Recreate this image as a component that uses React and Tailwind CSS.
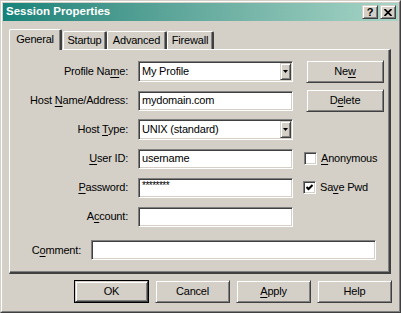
import React from "react";

const font = "font-['Liberation_Sans',Arial,sans-serif]";
const raised =
  "border border-t-[#d4d0c8] border-l-[#d4d0c8] border-r-[#404040] border-b-[#404040] shadow-[inset_1px_1px_0_#fff,inset_-1px_-1px_0_#808080] bg-[#d4d0c8]";
const sunken =
  "border border-t-[#808080] border-l-[#808080] border-r-white border-b-white shadow-[inset_1px_1px_0_#404040,inset_-1px_-1px_0_#d4d0c8]";

const U = ({ children }) => <span className="underline underline-offset-[2px]">{children}</span>;

const Label = ({ children }) => (
  <div className="text-right pr-px text-black whitespace-nowrap">{children}</div>
);

const TextBox = ({ value, w = "w-[155px]", small }) => (
  <div className={`${sunken} ${w} h-[20px] bg-white flex items-center pl-[3px] p-px`}>
    <span className={small ? "text-[10px] leading-none -mt-[3px] tracking-[-0.5px]" : ""}>{value}</span>
  </div>
);

const Combo = ({ value }) => (
  <div className={`${sunken} w-[155px] h-[21px] bg-white flex p-px`}>
    <div className="flex-1 flex items-center pl-[2px]">{value}</div>
    <div className={`${raised} w-[11px] h-full flex items-center justify-center`}>
      <svg width="5" height="3" viewBox="0 0 5 3">
        <path d="M0 0H5L2.5 3Z" fill="#000" />
      </svg>
    </div>
  </div>
);

const Button = ({ children, w = "w-[75px]", h = "h-[23px]" }) => (
  <div className={`${raised} ${w} ${h} flex items-center justify-center text-black`}>{children}</div>
);

const Check = ({ checked, children }) => (
  <div className="flex items-center gap-[4px]">
    <div className={`${sunken} w-[13px] h-[13px] bg-white flex items-center justify-center`}>
      {checked && (
        <svg width="7" height="7" viewBox="0 0 7 7">
          <path d="M0.5 3 L2.5 5 L6.5 1" stroke="#000" strokeWidth="2" fill="none" />
        </svg>
      )}
    </div>
    <span>{children}</span>
  </div>
);

const Tab = ({ children, selected, w }) => (
  <div
    className={`${w} ${
      selected ? "h-[21px] -mb-px relative z-10 pb-[2px]" : "h-[18px]"
    } bg-[#d4d0c8] border-t border-l border-t-white border-l-white border-r-2 border-r-[#404040] shadow-[inset_-1px_0_0_#808080] rounded-t-[2px] flex items-center justify-center`}
  >
    {children}
  </div>
);

export default function App() {
  return (
    <div
      className={`w-[401px] h-[313px] bg-[#d4d0c8] ${font} text-[11px] tracking-[-0.2px] text-black border border-t-[#d4d0c8] border-l-[#d4d0c8] border-r-[#404040] border-b-[#404040]`}
    >
      <div className="h-full border border-t-white border-l-white border-r-[#808080] border-b-[#808080] p-px flex flex-col">
        {/* Title bar */}
        <div className="h-[18px] shrink-0 bg-gradient-to-r from-[#13837a] to-[#a6d5c6] flex items-center pl-[3px] pr-[2px]">
          <span className="text-white font-bold text-[11.5px] tracking-normal flex-1">Session Properties</span>
          <div className={`${raised} w-[16px] h-[14px] flex items-center justify-center`}>
            <span className="font-bold text-[11px] leading-none tracking-normal">?</span>
          </div>
          <div className={`${raised} w-[16px] h-[14px] ml-[2px] flex items-center justify-center`}>
            <svg width="8" height="7" viewBox="0 0 8 7">
              <path d="M0.5 0 L7.5 7 M7.5 0 L0.5 7" stroke="#000" strokeWidth="1.7" />
            </svg>
          </div>
        </div>

        {/* Body */}
        <div className="flex-1 pl-[6px] pr-[6px] pt-[8px] flex flex-col">
          <div className="h-[20px] flex items-end">
            <Tab selected w="w-[53px]">General</Tab>
            <Tab w="w-[44px] ml-px">Startup</Tab>
            <Tab w="w-[60px]">Advanced</Tab>
            <Tab w="w-[47px]">Firewall</Tab>
          </div>

          <div className="w-[382px] h-[225px] border-t border-l border-t-white border-l-white border-r-2 border-b-2 border-r-[#404040] border-b-[#404040] shadow-[inset_-1px_-1px_0_#808080] pt-[7px]">
            <div className="grid grid-cols-[119px_155px_1fr] auto-rows-[29px] items-center gap-x-[9px]">
              <Label>
                Profile Na<U>m</U>e:
              </Label>
              <Combo value="My Profile" />
              <div className="pl-[4px]">
                <Button w="w-[78px]">
                  Ne<U>w</U>
                </Button>
              </div>

              <Label>
                Host <U>N</U>ame/Address:
              </Label>
              <TextBox value="mydomain.com" />
              <div className="pl-[4px]">
                <Button w="w-[78px]">
                  D<U>e</U>lete
                </Button>
              </div>

              <Label>
                Host <U>T</U>ype:
              </Label>
              <Combo value="UNIX (standard)" />
              <div />

              <Label>
                <U>U</U>ser ID:
              </Label>
              <TextBox value="username" />
              <div className="pl-[2px]">
                <Check>
                  <U>A</U>nonymous
                </Check>
              </div>

              <Label>
                <U>P</U>assword:
              </Label>
              <TextBox value="********" small />
              <div className="pl-[1px]">
                <Check checked>
                  Sa<U>v</U>e Pwd
                </Check>
              </div>

              <Label>
                A<U>c</U>count:
              </Label>
              <TextBox value="" />
              <div />
            </div>

            <div className="flex items-center gap-[10px] mt-[9px]">
              <div className="w-[71px] text-right">
                C<U>o</U>mment:
              </div>
              <TextBox value="" w="w-[285px]" />
            </div>
          </div>

          <div className="flex justify-end gap-[6px] mt-[6px]">
            <div className="border border-black">
              <Button w="w-[73px]" h="h-[21px]">OK</Button>
            </div>
            <Button>Cancel</Button>
            <Button>
              <U>A</U>pply
            </Button>
            <Button>Help</Button>
          </div>
        </div>
      </div>
    </div>
  );
}
